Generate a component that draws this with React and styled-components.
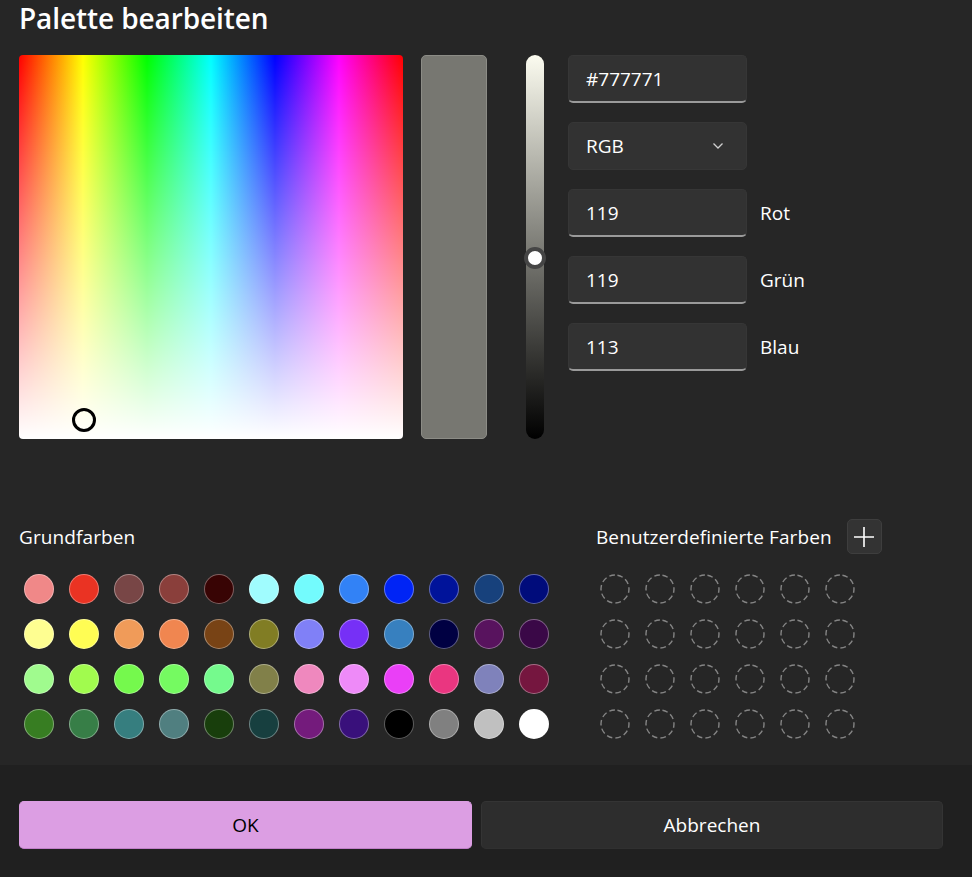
import React from "react";
import styled, { createGlobalStyle } from "styled-components";

const GlobalStyle = createGlobalStyle`
  html, body {
    margin: 0;
    padding: 0;
    background: #262626;
  }
  body {
    font-family: "Open Sans", "Noto Sans", sans-serif;
    color: #ffffff;
  }
`;

const Window = styled.div`
  width: 972px;
  height: 877px;
  display: flex;
  flex-direction: column;
  background: #262626;
  overflow: hidden;
`;

const Content = styled.div`
  height: 765px;
  padding: 0 19px;
  box-sizing: border-box;
`;

const Title = styled.h1`
  margin: 0 0 19px;
  font-size: 28px;
  font-weight: 600;
  line-height: 36px;
  letter-spacing: -0.1px;
`;

const PickerRow = styled.div`
  display: flex;
  align-items: flex-start;
`;

const Spectrum = styled.div`
  position: relative;
  width: 384px;
  height: 384px;
  border-radius: 4px;
  background:
    linear-gradient(to bottom, rgba(255, 255, 255, 0), #ffffff),
    linear-gradient(
      to right,
      #ff0000 0%,
      #ffff00 16.67%,
      #00ff00 33.33%,
      #00ffff 50%,
      #0000ff 66.67%,
      #ff00ff 83.33%,
      #ff0000 100%
    );
`;

const SpectrumCursor = styled.div`
  position: absolute;
  left: 53px;
  top: 353px;
  width: 18px;
  height: 18px;
  border: 3px solid #000;
  border-radius: 50%;
`;

const Preview = styled.div`
  width: 66px;
  height: 384px;
  margin-left: 18px;
  box-sizing: border-box;
  border-radius: 5px;
  border: 1px solid #8c8c86;
  background: #777771;
`;

const Slider = styled.div`
  position: relative;
  width: 18px;
  height: 384px;
  margin-left: 39px;
  border-radius: 9px;
  background: linear-gradient(to bottom, #fbfbef 0%, #777771 52%, #000000 100%);
`;

const Thumb = styled.div`
  position: absolute;
  left: -2px;
  top: 192px;
  width: 14px;
  height: 14px;
  border: 4px solid #454545;
  border-radius: 50%;
  background: #ffffff;
`;

const Fields = styled.div`
  display: flex;
  flex-direction: column;
  gap: 19px;
  margin-left: 24px;
`;

const FieldRow = styled.div`
  display: flex;
  align-items: center;
  gap: 13px;
`;

const Field = styled.div`
  width: 179px;
  height: 48px;
  box-sizing: border-box;
  display: flex;
  align-items: center;
  justify-content: space-between;
  padding: 0 22px 0 17px;
  border-radius: 5px;
  background: #323232;
  border: 1px solid #363636;
  border-bottom: ${p => (p.$select ? "1px solid #363636" : "2px solid #9a9a9a")};
  font-size: 19px;
  color: #ffffff;
`;

const FieldLabel = styled.span`
  font-size: 19px;
`;

const Chevron = () => (
  <svg width="12" height="8" viewBox="0 0 12 8">
    <path d="M1.5 1.5 L6 6 L10.5 1.5" stroke="#d0d0d0" strokeWidth="1.3" fill="none" />
  </svg>
);

const SwatchArea = styled.div`
  display: flex;
  margin-top: 80px;
`;

const SwatchGroup = styled.div`
  width: ${p => p.$width}px;
`;

const GroupHeader = styled.div`
  display: flex;
  align-items: center;
  height: 35px;
  gap: 15px;
  font-size: 19px;
  letter-spacing: 0.1px;
`;

const AddButton = styled.div`
  width: 35px;
  height: 35px;
  box-sizing: border-box;
  border-radius: 5px;
  background: #333333;
  border: 1px solid #3e3e3e;
  display: flex;
  align-items: center;
  justify-content: center;
`;

const SwatchGrid = styled.div`
  display: grid;
  grid-template-columns: repeat(${p => p.$cols}, 30px);
  grid-auto-rows: 30px;
  gap: 15px;
  margin-top: 20px;
  padding-left: ${p => p.$offset}px;
`;

const Swatch = styled.div`
  width: 30px;
  height: 30px;
  box-sizing: border-box;
  border-radius: 50%;
  background: ${p => p.$color};
  border: 1px solid rgba(255, 255, 255, 0.36);
`;

const EmptySwatch = () => (
  <svg width="30" height="30" viewBox="0 0 30 30">
    <circle
      cx="15"
      cy="15"
      r="14"
      fill="none"
      stroke="#858585"
      strokeWidth="1.4"
      strokeDasharray="5.6 3.2"
      transform="rotate(-80 15 15)"
    />
  </svg>
);

const Footer = styled.div`
  flex: 1;
  background: #202020;
  display: grid;
  grid-template-columns: 453px 462px;
  gap: 9px;
  padding: 36px 0 0 19px;
  box-sizing: border-box;
`;

const Button = styled.button`
  height: 48px;
  border-radius: 5px;
  font-family: "Open Sans", "Noto Sans", sans-serif;
  font-size: 19px;
  cursor: pointer;
  background: ${p => (p.$primary ? "#dc9ee3" : "#2d2d2d")};
  color: ${p => (p.$primary ? "#000000" : "#ffffff")};
  border: 1px solid ${p => (p.$primary ? "#dc9ee3" : "#343434")};
  border-bottom: 1px solid ${p => (p.$primary ? "#c07fc8" : "#303030")};
`;

const basicColors = [
  "#f08888", "#ea3323", "#784646", "#8a3f3b", "#380404", "#a0fcfe",
  "#73fbfd", "#3282f6", "#0024f5", "#00139a", "#17417c", "#000c7b",
  "#fefe91", "#fffd54", "#f09b59", "#f08650", "#784315", "#817d24",
  "#8080f7", "#7630f6", "#3780bf", "#000042", "#58135e", "#3a0847",
  "#a0fb8e", "#a1fb4e", "#75f94d", "#75fa61", "#75fa8d", "#818049",
  "#ef88be", "#ee8af8", "#ea3ff7", "#ea3680", "#7f82bb", "#75163f",
  "#377d22", "#377e47", "#367e7f", "#507f80", "#183e0c", "#173f3f",
  "#741b7c", "#39107b", "#000000", "#808080", "#c0c0c0", "#ffffff"
];

const channels = [
  { value: "119", label: "Rot" },
  { value: "119", label: "Grün" },
  { value: "113", label: "Blau" }
];

export default function App() {
  return (
    <Window>
      <GlobalStyle />
      <Content>
        <Title>Palette bearbeiten</Title>
        <PickerRow>
          <Spectrum>
            <SpectrumCursor />
          </Spectrum>
          <Preview />
          <Slider>
            <Thumb />
          </Slider>
          <Fields>
            <Field>#777771</Field>
            <Field $select>
              RGB
              <Chevron />
            </Field>
            {channels.map(c => (
              <FieldRow key={c.label}>
                <Field>{c.value}</Field>
                <FieldLabel>{c.label}</FieldLabel>
              </FieldRow>
            ))}
          </Fields>
        </PickerRow>

        <SwatchArea>
          <SwatchGroup $width={577}>
            <GroupHeader>Grundfarben</GroupHeader>
            <SwatchGrid $cols={12} $offset={5}>
              {basicColors.map((c, i) => (
                <Swatch key={i} $color={c} />
              ))}
            </SwatchGrid>
          </SwatchGroup>
          <SwatchGroup $width={340}>
            <GroupHeader>
              Benutzerdefinierte Farben
              <AddButton>
                <svg width="22" height="22" viewBox="0 0 22 22">
                  <path d="M11 1 V21 M1 11 H21" stroke="#ffffff" strokeWidth="1.6" />
                </svg>
              </AddButton>
            </GroupHeader>
            <SwatchGrid $cols={6} $offset={4}>
              {Array.from({ length: 24 }).map((_, i) => (
                <EmptySwatch key={i} />
              ))}
            </SwatchGrid>
          </SwatchGroup>
        </SwatchArea>
      </Content>
      <Footer>
        <Button $primary>OK</Button>
        <Button>Abbrechen</Button>
      </Footer>
    </Window>
  );
}
